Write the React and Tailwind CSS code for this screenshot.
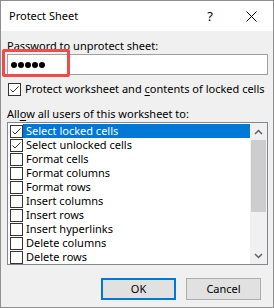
import React from 'react';

const items = [
  { label: 'Select locked cells', checked: true, selected: true },
  { label: 'Select unlocked cells', checked: true },
  { label: 'Format cells' },
  { label: 'Format columns' },
  { label: 'Format rows' },
  { label: 'Insert columns' },
  { label: 'Insert rows' },
  { label: 'Insert hyperlinks' },
  { label: 'Delete columns' },
  { label: 'Delete rows' },
];

const CheckBox = ({ checked }) => (
  <div className="w-[13px] h-[13px] border border-[#333] bg-white shrink-0 flex items-center justify-center">
    {checked && (
      <svg width="11" height="11" viewBox="0 0 11 11">
        <path d="M1.5 5.5 L4 8 L9.5 2.5" fill="none" stroke="#333" strokeWidth="1" />
      </svg>
    )}
  </div>
);

const App = () => {
  return (
    <div
      className="relative w-[274px] h-[308px] border border-[#8f8f8f] bg-[#f0f0f0] flex flex-col text-[11px] text-black whitespace-nowrap"
      style={{ fontFamily: '"Segoe UI", "Noto Sans", sans-serif' }}
    >
      {/* title bar */}
      <div className="h-[30px] bg-white flex items-center pl-[8px] shrink-0">
        <span className="leading-[16px]">Protect Sheet</span>
        <span className="ml-auto mr-[33px] text-[13px] leading-[16px]">?</span>
        <svg className="mr-[16px]" width="11" height="11" viewBox="0 0 11 11">
          <path d="M0.5 0.5 L10.5 10.5 M10.5 0.5 L0.5 10.5" stroke="#000" strokeWidth="1" />
        </svg>
      </div>

      {/* body */}
      <div className="px-[6px] flex flex-col">
        <div className="mt-[7px] leading-[16px]">Password to unprotect sheet:</div>
        <div className="h-[21px] w-[261px] border border-[#a0a0a0] bg-white flex items-center pl-[3px] gap-[1px]">
          {[0, 1, 2, 3, 4].map((i) => (
            <span key={i} className="w-[6px] h-[6px] rounded-full bg-black" />
          ))}
        </div>

        <div className="mt-[6px] h-[16px] flex items-center gap-[4px] pl-[1px]">
          <CheckBox checked />
          <span className="leading-[16px]">
            Protect worksheet and <u className="underline-offset-2">c</u>ontents of locked cells
          </span>
        </div>

        <div className="mt-[9px] leading-[16px]">
          All<u className="underline-offset-2">o</u>w all users of this worksheet to:
        </div>

        {/* list */}
        <div className="h-[143px] w-[261px] border border-[#828790] bg-white flex overflow-hidden">
          <div className="flex-1 pt-[1px] pl-[2px] flex flex-col">
            {items.map((it) => (
              <div key={it.label} className="h-[14px] flex items-center">
                <CheckBox checked={it.checked} />
                <div
                  className={
                    it.selected
                      ? 'flex-1 h-[14px] bg-[#0078d7] text-white pl-[3px] leading-[14px]'
                      : 'flex-1 h-[14px] pl-[3px] leading-[14px]'
                  }
                >
                  {it.label}
                </div>
              </div>
            ))}
          </div>
          <div className="w-[17px] bg-[#f0f0f0] flex flex-col items-center">
            <div className="h-[17px] flex items-center justify-center">
              <svg width="9" height="6" viewBox="0 0 9 6">
                <path d="M1 5 L4.5 1.5 L8 5" fill="none" stroke="#606060" strokeWidth="1.5" />
              </svg>
            </div>
            <div className="w-[15px] h-[72px] bg-[#cdcdcd]" />
            <div className="flex-1" />
            <div className="h-[17px] flex items-center justify-center">
              <svg width="9" height="6" viewBox="0 0 9 6">
                <path d="M1 1 L4.5 4.5 L8 1" fill="none" stroke="#606060" strokeWidth="1.5" />
              </svg>
            </div>
          </div>
        </div>

        {/* buttons */}
        <div className="mt-[13px] flex justify-end gap-[10px] pr-[6px]">
          <button className="w-[75px] h-[22px] border-2 border-[#0078d7] bg-[#e1e1e1] leading-[16px]">
            OK
          </button>
          <button className="w-[75px] h-[22px] border border-[#adadad] bg-[#e1e1e1] leading-[16px]">
            Cancel
          </button>
        </div>
      </div>

      {/* red highlight */}
      <div className="absolute left-[1px] top-[48px] w-[68px] h-[28px] border-[3px] border-[#ee4b4b] rounded-[2px]" />
    </div>
  );
};

export default App;
